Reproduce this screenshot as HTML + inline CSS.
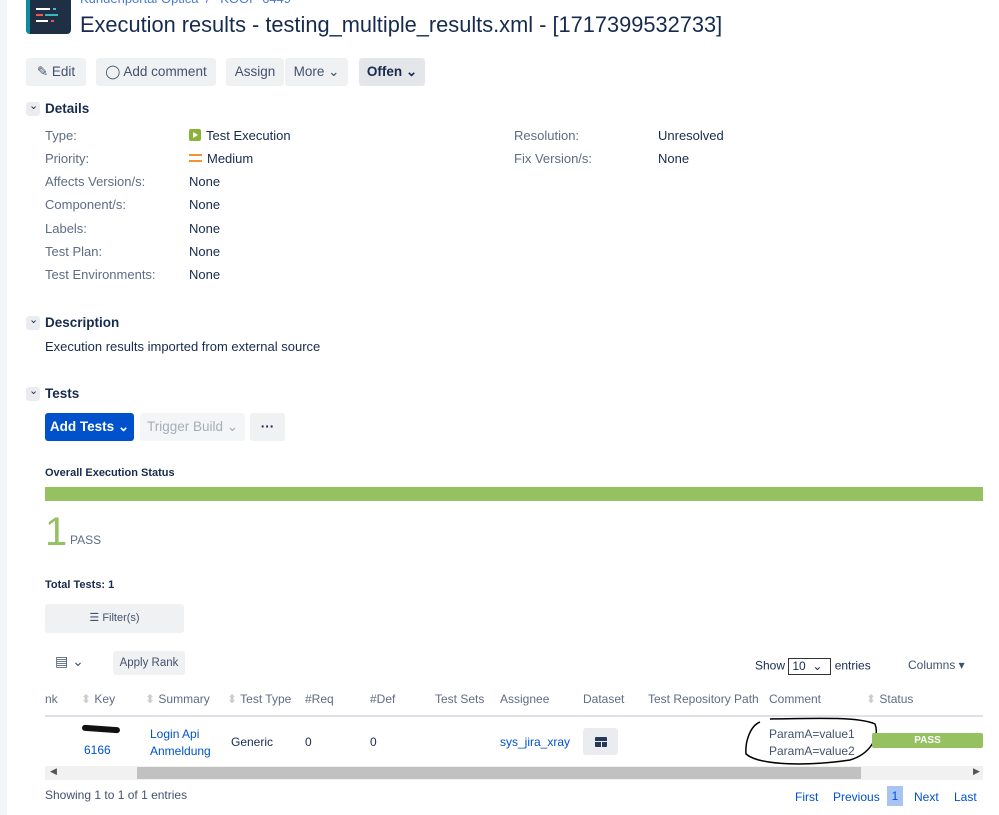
<!DOCTYPE html>
<html><head><meta charset="utf-8"><style>
*{box-sizing:border-box;margin:0;padding:0}
body{width:999px;height:815px;overflow:hidden;background:#fff;font-family:"Liberation Sans",sans-serif;color:#172b4d;font-size:13px;position:relative}
.a{position:absolute;white-space:nowrap}
.btn{position:absolute;background:#f0f1f3;border-radius:3px;height:28px;line-height:28px;font-size:13.5px;color:#42526e;text-align:center}
.lbl{color:#5e6c84}
.lnk{color:#0052cc}
.h{font-weight:bold;font-size:13.5px}
.tw{position:absolute;width:14px;height:14px;background:#ebecf0;border-radius:3px}
.th{position:absolute;top:692px;font-size:12px;color:#5e6c84}
</style></head><body>
<div class="a" style="left:0;top:0;width:7px;height:815px;background:#f4f5f7"></div>
<div class="a" style="left:26px;top:-10px;width:45px;height:44px;background:#1f3044;border-radius:4px;overflow:hidden">
<div style="position:absolute;left:0;top:0;width:4px;height:44px;background:#0d8ba0"></div>
<div style="position:absolute;left:10px;top:18px;width:14px;height:2px;background:#fff"></div>
<div style="position:absolute;left:27px;top:18px;width:3px;height:2px;background:#5aaee6"></div>
<div style="position:absolute;left:10px;top:24px;width:7px;height:2px;background:#e55"></div>
<div style="position:absolute;left:19px;top:24px;width:13px;height:2px;background:#3bb"></div>
<div style="position:absolute;left:10px;top:30px;width:12px;height:2px;background:#fff"></div>
<div style="position:absolute;left:25px;top:30px;width:3px;height:2px;background:#e55"></div>
</div>
<div class="a lnk" style="left:80px;top:-9px;font-size:13px;color:#4a7bd0">Kundenportal Optica &nbsp;/ &nbsp; KOOP-6449</div>
<div class="a" style="left:80px;top:12px;font-size:21.8px;color:#172b4d">Execution results - testing_multiple_results.xml - [1717399532733]</div>

<div class="btn" style="left:26px;top:58px;width:60px">✎ Edit</div>
<div class="btn" style="left:96px;top:58px;width:120px">◯ Add comment</div>
<div class="btn" style="left:226px;top:58px;width:58px">Assign</div>
<div class="btn" style="left:285px;top:58px;width:63px">More ⌄</div>
<div class="btn" style="left:359px;top:58px;width:66px;background:#e4e6ea;color:#172b4d;font-weight:bold">Offen ⌄</div>

<div class="tw" style="left:26px;top:102px"></div><div class="a" style="left:29px;top:99px;font-size:11px">⌄</div>
<div class="a h" style="left:45px;top:101px">Details</div>
<div class="a lbl" style="left:45px;top:128px">Type:</div><div class="a" style="left:189px;top:128px"><span style="display:inline-block;width:12px;height:12px;background:#8bb33a;border-radius:2px;vertical-align:-1px;margin-right:5px;position:relative"><span style="position:absolute;left:4px;top:3px;border-left:5px solid #fff;border-top:3px solid transparent;border-bottom:3px solid transparent"></span></span>Test Execution</div>
<div class="a lbl" style="left:45px;top:151px">Priority:</div><div class="a" style="left:189px;top:151px"><span style="display:inline-block;width:13px;height:8px;border-top:2px solid #f79232;border-bottom:2px solid #f79232;vertical-align:1px;margin-right:5px"></span>Medium</div>
<div class="a lbl" style="left:45px;top:174px">Affects Version/s:</div><div class="a" style="left:189px;top:174px">None</div>
<div class="a lbl" style="left:45px;top:197px">Component/s:</div><div class="a" style="left:189px;top:197px">None</div>
<div class="a lbl" style="left:45px;top:221px">Labels:</div><div class="a" style="left:189px;top:221px">None</div>
<div class="a lbl" style="left:45px;top:244px">Test Plan:</div><div class="a" style="left:189px;top:244px">None</div>
<div class="a lbl" style="left:45px;top:267px">Test Environments:</div><div class="a" style="left:189px;top:267px">None</div>
<div class="a lbl" style="left:514px;top:128px">Resolution:</div><div class="a" style="left:658px;top:128px">Unresolved</div>
<div class="a lbl" style="left:514px;top:151px">Fix Version/s:</div><div class="a" style="left:658px;top:151px">None</div>

<div class="tw" style="left:26px;top:316px"></div><div class="a" style="left:29px;top:313px;font-size:11px">⌄</div>
<div class="a h" style="left:45px;top:315px">Description</div>
<div class="a" style="left:45px;top:339px">Execution results imported from external source</div>

<div class="tw" style="left:26px;top:387px"></div><div class="a" style="left:29px;top:384px;font-size:11px">⌄</div>
<div class="a h" style="left:45px;top:386px">Tests</div>
<div class="btn" style="left:45px;top:413px;width:89px;background:#0052cc;color:#fff;font-weight:bold">Add Tests ⌄</div>
<div class="btn" style="left:140px;top:413px;width:105px;background:#f4f5f7;color:#a5adba">Trigger Build ⌄</div>
<div class="btn" style="left:250px;top:413px;width:35px;font-weight:bold;color:#172b4d">···</div>

<div class="a" style="left:45px;top:467px;font-size:11px;font-weight:bold">Overall Execution Status</div>
<div class="a" style="left:45px;top:487px;width:938px;height:14px;background:#95c160"></div>
<div class="a" style="left:45px;top:510px;font-size:40px;color:#95c160;line-height:44px">1</div>
<div class="a" style="left:70px;top:533px;font-size:12px;color:#5e6c84">PASS</div>
<div class="a" style="left:45px;top:579px;font-size:11px;font-weight:bold">Total Tests: 1</div>
<div class="btn" style="left:45px;top:604px;width:139px;height:29px;font-size:11px;color:#42526e">☰ Filter(s)</div>

<div class="a" style="left:55px;top:653px;font-size:14px;color:#42526e">▤ ⌄</div>
<div class="btn" style="left:113px;top:651px;width:72px;height:24px;line-height:24px;font-size:11.5px">Apply Rank</div>
<div class="a" style="left:755px;top:658px;font-size:12px">Show <span style="display:inline-block;width:43px;height:17px;border:1px solid #333;vertical-align:middle;font-size:12px;line-height:15px;padding-left:3px">10 &nbsp;⌄</span> entries</div>
<div class="a" style="left:908px;top:658px;font-size:12px;color:#42526e">Columns ▾</div>

<div class="th" style="left:45px">nk</div>
<div class="th" style="left:81px"><span style="color:#ccc">⬍</span> Key</div>
<div class="th" style="left:145px"><span style="color:#ccc">⬍</span> Summary</div>
<div class="th" style="left:227px"><span style="color:#ccc">⬍</span> Test Type</div>
<div class="th" style="left:305px">#Req</div>
<div class="th" style="left:370px">#Def</div>
<div class="th" style="left:435px">Test Sets</div>
<div class="th" style="left:500px">Assignee</div>
<div class="th" style="left:583px">Dataset</div>
<div class="th" style="left:648px">Test Repository Path</div>
<div class="th" style="left:769px">Comment</div>
<div class="th" style="left:866px"><span style="color:#ccc">⬍</span> Status</div>
<div class="a" style="left:45px;top:715px;width:938px;height:2px;background:#dfe1e6"></div>

<div class="a" style="left:82px;top:726px;width:38px;height:6px;background:#111;border-radius:4px;transform:rotate(4deg)"></div>
<div class="a lnk" style="left:84px;top:743px;font-size:12px">6166</div>
<div class="a lnk" style="left:150px;top:726px;font-size:12px;line-height:17px">Login Api<br>Anmeldung</div>
<div class="a" style="left:231px;top:735px;font-size:12px">Generic</div>
<div class="a" style="left:305px;top:735px;font-size:12px">0</div>
<div class="a" style="left:370px;top:735px;font-size:12px">0</div>
<div class="a lnk" style="left:500px;top:735px;font-size:12px">sys_jira_xray</div>
<div class="a" style="left:583px;top:728px;width:35px;height:27px;background:#ebecf0;border-radius:3px"><div style="position:absolute;left:12px;top:9px;width:12px;height:10px;background:#253858;border-radius:1px"></div><div style="position:absolute;left:12px;top:13px;width:12px;height:1px;background:#ebecf0"></div><div style="position:absolute;left:17.5px;top:13px;width:1px;height:6px;background:#ebecf0"></div></div>
<div class="a" style="left:769px;top:726px;font-size:12px;line-height:17px;color:#42526e">ParamA=value1<br>ParamA=value2</div>
<svg class="a" style="left:740px;top:712px" width="145" height="58"><path d="M20 10 C10 14 5 30 6 42 C20 54 70 54 110 48 C130 42 140 25 135 12 C120 5 80 6 30 7" fill="none" stroke="#000" stroke-width="1.5"/></svg>
<div class="a" style="left:872px;top:733px;width:111px;height:15px;background:#95c160;color:#fff;font-size:10px;font-weight:bold;text-align:center;line-height:15px;border-radius:2px">PASS</div>

<div class="a" style="left:45px;top:766px;width:938px;height:14px;background:#f1f1f1"></div>
<div class="a" style="left:137px;top:767px;width:724px;height:12px;background:#c1c1c1"></div>
<div class="a" style="left:50px;top:766px;font-size:9px;color:#555">◀</div>
<div class="a" style="left:973px;top:766px;font-size:9px;color:#555">▶</div>

<div class="a" style="left:45px;top:788px;font-size:12px;color:#42526e">Showing 1 to 1 of 1 entries</div>
<div class="a lnk" style="left:795px;top:790px;font-size:12px">First</div>
<div class="a lnk" style="left:833px;top:790px;font-size:12px">Previous</div>
<div class="a" style="left:887px;top:786px;width:16px;height:20px;background:#a8c4f2;color:#0052cc;font-size:12px;text-align:center;line-height:20px">1</div>
<div class="a lnk" style="left:914px;top:790px;font-size:12px">Next</div>
<div class="a lnk" style="left:954px;top:790px;font-size:12px">Last</div>
</body></html>
